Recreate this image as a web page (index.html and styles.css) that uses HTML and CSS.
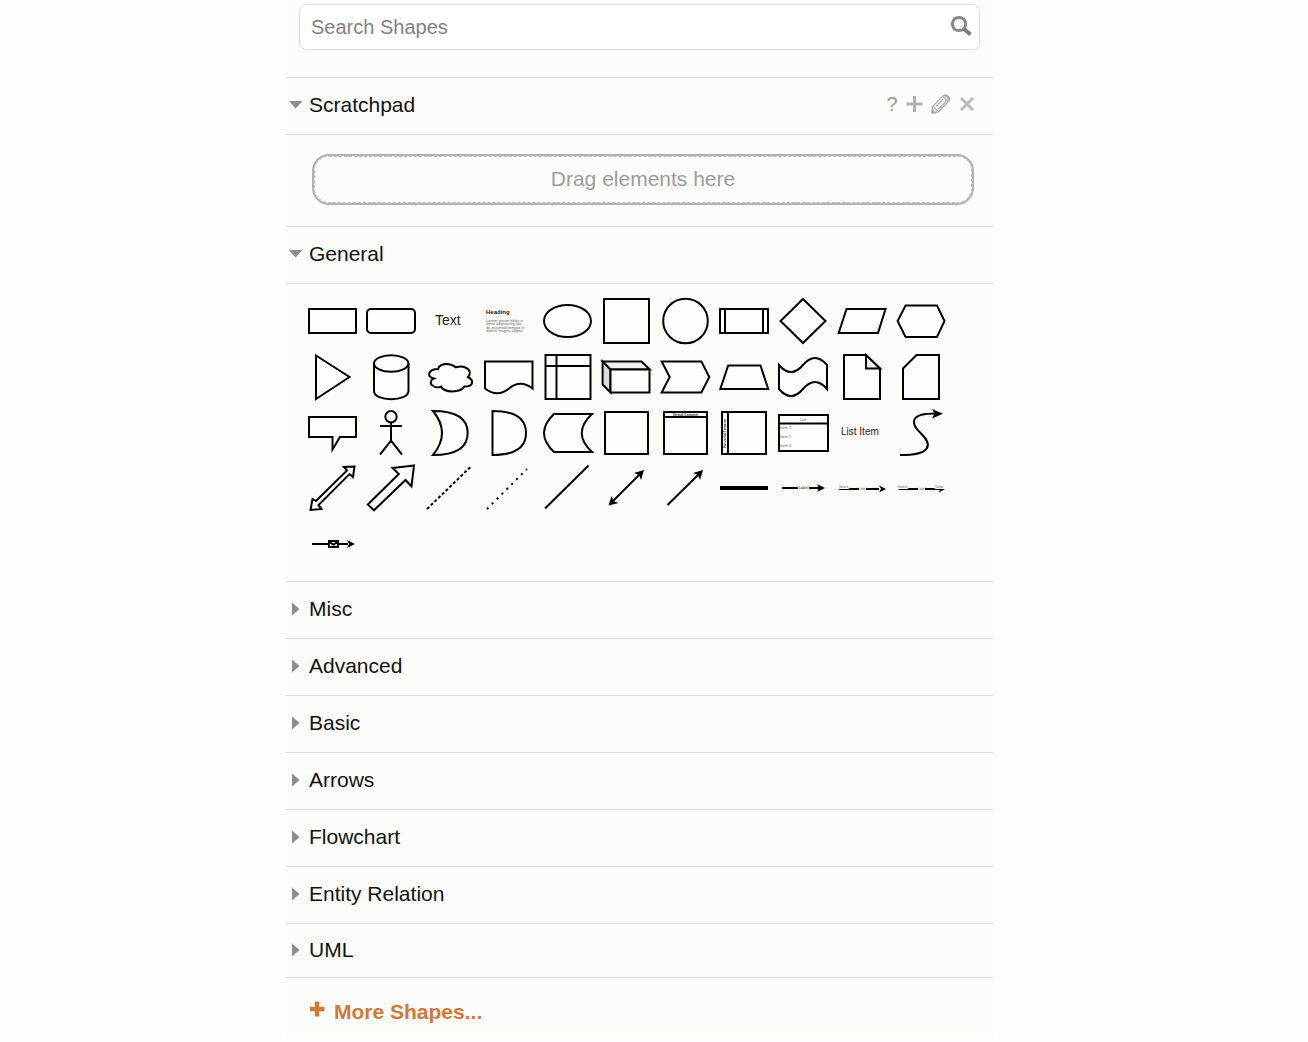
FILE: index.html
```html
<!DOCTYPE html>
<html lang="en">
<head>
<meta charset="utf-8">
<meta name="viewport" content="width=device-width, initial-scale=1">
<title>Shapes</title>
<link rel="stylesheet" href="styles.css">
</head>
<body>
<aside class="sidebar">
  <form class="search" role="search">
    <input class="search-input" type="text" placeholder="Search Shapes" aria-label="Search Shapes">
    <button class="search-button" type="button" aria-label="Search">
      <svg width="24" height="24" viewBox="0 0 24 24"><circle cx="9" cy="9" r="6.700" fill="none" stroke="#858585" stroke-width="2.800"/><path d="M14 14L20.500 19.500" stroke="#7c7c7c" stroke-width="3.800"/></svg>
    </button>
  </form>

  <section>
    <div class="header">
      <button class="toggle" type="button" aria-expanded="true"><svg class="marker" width="16" height="16" viewBox="0 0 16 16"><path d="M1 4H14.500L7.700 11.500Z"/></svg>Scratchpad</button>
      <div class="tools">
        <button class="tool" type="button" aria-label="Help">?</button>
        <button class="tool" type="button" aria-label="Add"><svg width="20" height="20" viewBox="0 0 20 20"><path d="M9.500 2V18M1.500 10H17.500" stroke="#b0b0b0" stroke-width="3"/></svg></button>
        <button class="tool" type="button" aria-label="Edit"><svg width="22" height="22" viewBox="0 0 22 22"><path d="M2 19.500L2.500 13.500L13.500 2.500Q15 1.200 17 2.500L19.200 4.700Q20.300 6.500 19 8L8 19Z M3 13.500L8 18.500M13 3.500L18.500 9M6 13.500L13.500 6M8.500 16L16 8.500" fill="none" stroke="#b0b0b0" stroke-width="1.300"/><path d="M1.500 20.500V15.500L6.500 20.500ZM13.500 2.500Q15.500 1 17.500 2.500L19.500 4.500Q20.500 6.500 19 8L16.500 4.500Z" fill="#a6a6a6"/></svg></button>
        <button class="tool" type="button" aria-label="Close"><svg width="20" height="20" viewBox="0 0 20 20"><path d="M4 4L16 16M16 4L4 16" stroke="#bababa" stroke-width="3"/></svg></button>
      </div>
    </div>
    <div class="scratchpad"><div class="dropzone">Drag elements here</div></div>
  </section>

  <section>
    <div class="header"><button class="toggle" type="button" aria-expanded="true"><svg class="marker" width="16" height="16" viewBox="0 0 16 16"><path d="M1 4H14.500L7.700 11.500Z"/></svg>General</button></div>
    <div class="shapes">
      <svg class="shape" viewBox="0 0 56 56"><rect x="5" y="16" width="47" height="24"/></svg>
      <svg class="shape" viewBox="0 0 56 56"><rect x="4" y="16" width="48" height="24" rx="4"/></svg>
      <svg class="shape" viewBox="0 0 56 56"><text class="t14" x="13" y="32">Text</text></svg>
      <svg class="shape" viewBox="0 0 56 56"><text class="t6 bold" x="5" y="21">Heading</text><g class="t4 faint"><text x="5" y="29">Lorem ipsum dolor si</text><text x="5" y="32">amet adipisicing elit.</text><text x="5" y="36">do eiusmod tempor in</text><text x="5" y="39">dolore magna aliqua.</text></g></svg>
      <svg class="shape" viewBox="0 0 56 56"><ellipse cx="27.500" cy="28" rx="23.500" ry="16"/></svg>
      <svg class="shape" viewBox="0 0 56 56"><rect x="6" y="6" width="45" height="44"/></svg>
      <svg class="shape" viewBox="0 0 56 56"><circle cx="28.500" cy="28" r="22.300"/></svg>
      <svg class="shape" viewBox="0 0 56 56"><path d="M4 16H52V40H4ZM9 16V40M47 16V40"/></svg>
      <svg class="shape" viewBox="0 0 56 56"><path d="M28 6L50.500 28L28 50L5.500 28Z"/></svg>
      <svg class="shape" viewBox="0 0 56 56"><path d="M12.500 16H51.500L44 40H4.700Z"/></svg>
      <svg class="shape" viewBox="0 0 56 56"><path d="M12.600 12.500H44L51.500 28L44 44H12.600L4.600 28Z"/></svg>

      <svg class="shape" viewBox="0 0 56 56"><path d="M12 6.500L45.500 28L12 50Z"/></svg>
      <svg class="shape" viewBox="0 0 56 56"><path d="M11 14.500V42C11 53 45.500 53 45.500 42V14.500"/><ellipse cx="28.200" cy="14.500" rx="17.200" ry="8.300"/></svg>
      <svg class="shape" viewBox="0 0 56 56"><path d="M16 20C6.400 20 4 28 11.700 29.600C4 33.100 12.600 40.800 18.900 37.600C23.200 44 37.600 44 42.400 37.600C52 37.600 52 31.200 46 28C52 21.600 42.400 15.200 34 18.400C28 13.600 18.400 13.600 16 20Z"/></svg>
      <svg class="shape" viewBox="0 0 56 56"><path d="M4 12.500H51.500V39.500Q39.500 30 28 39.500T4 39.500Z"/></svg>
      <svg class="shape" viewBox="0 0 56 56"><path d="M5.500 6H50.500V50H5.500ZM16.500 6V50M5.500 17H50.500"/></svg>
      <svg class="shape" viewBox="0 0 56 56"><path class="shade-light" d="M4.600 12.500H43.500L51.800 20.500H12.500Z"/><path class="shade" d="M4.600 12.500L12.500 20.500V43.500L4.600 35.500Z"/><path d="M12.500 20.500H51.500V43.500H12.500Z"/></svg>
      <svg class="shape" viewBox="0 0 56 56"><path d="M4.700 12.500H44.400L52.300 28L44.400 43.500H4.700L12.700 28Z"/></svg>
      <svg class="shape" viewBox="0 0 56 56"><path d="M12.200 16.500H44.500L52.200 40H4.300Z"/></svg>
      <svg class="shape" viewBox="0 0 56 56"><path d="M4 16Q16 30 28 16T52 16V40Q40 26 28 40T4 40Z"/></svg>
      <svg class="shape" viewBox="0 0 56 56"><path d="M10 6H32L46 19.500V50H10Z"/><path class="shade-light" d="M32 6V19.500H46Z"/></svg>
      <svg class="shape" viewBox="0 0 56 56"><path d="M23.500 6H46V50H10V19.500Z"/></svg>

      <svg class="shape" viewBox="0 0 56 56"><path d="M5 12H52V32H36L28.500 44.500V32H5Z"/></svg>
      <svg class="shape" viewBox="0 0 56 56"><circle cx="28" cy="11.700" r="5.700"/><path d="M28 17.300V35.700M17 21H39M17 49.700L28 35.700L39 49.700"/></svg>
      <svg class="shape" viewBox="0 0 56 56"><path d="M11 6Q45.700 6 45.700 28T11 50Q29 28 11 6Z"/></svg>
      <svg class="shape" viewBox="0 0 56 56"><path d="M11.500 6Q45 6 45 28T11.500 50Z"/></svg>
      <svg class="shape" viewBox="0 0 56 56"><path d="M14 9H52Q31.500 28 52 47H14Q-6 28 14 9Z"/></svg>
      <svg class="shape" viewBox="0 0 56 56"><rect x="7" y="7" width="43" height="42"/></svg>
      <svg class="shape" viewBox="0 0 56 56"><path d="M7 7H50V49H7ZM7 12H50"/><text class="t3 bold" x="28.500" y="10.500" text-anchor="middle">Vertical Container</text></svg>
      <svg class="shape" viewBox="0 0 56 56"><path d="M6 7H50V49H6ZM12 7V49"/><text class="t3 bold" transform="translate(10 28) rotate(-90)" text-anchor="middle">Horizontal Container</text></svg>
      <svg class="shape" viewBox="0 0 56 56"><path d="M4 10H53V46H4ZM4 18.500H53"/><text class="t4 faint" x="28" y="15.500" text-anchor="middle">List</text><g class="t4 faint"><text x="5" y="24">Item 1</text><text x="5" y="33">Item 2</text><text x="5" y="42">Item 3</text></g></svg>
      <svg class="shape" viewBox="0 0 56 56"><text class="t10" x="7" y="30">List Item</text></svg>
      <svg class="shape" viewBox="0 0 56 56"><path class="line" d="M7 50C38 50 40 40 28 28.500C16 17 18 8.500 42 8.500"/><path class="head" d="M50 8.700L39 4L41.500 8.700L39 13.500Z"/></svg>

      <svg class="shape" viewBox="0 0 56 56"><path d="M50.500 5.500L40 6L43 9.500L12 40L8.500 38L6.500 49L17.500 48L14.500 44L45.500 13L49 16Z"/></svg>
      <svg class="shape" viewBox="0 0 56 56"><path d="M51 4.500L29.500 7L35.800 13L4.800 43.500L11 49.300L42.500 19L48.500 25.300Z"/></svg>
      <svg class="shape" viewBox="0 0 56 56"><path class="line" stroke-dasharray="3 2.200" d="M5 48L49 5.500"/></svg>
      <svg class="shape" viewBox="0 0 56 56"><path class="line" stroke-dasharray="2 4.900" d="M6 48L46 8"/></svg>
      <svg class="shape" viewBox="0 0 56 56"><path class="line" d="M5 47.500L48.500 4.500"/></svg>
      <svg class="shape" viewBox="0 0 56 56"><path class="line" d="M14 41L42 13"/><path class="head" d="M46 9L36 12L41 14L43 19ZM10.500 44.500L20.500 42L15.500 40L13.500 35Z"/></svg>
      <svg class="shape" viewBox="0 0 56 56"><path class="line" d="M10.500 44L42 13"/><path class="head" d="M46 9L36 12L41 14L43 19Z"/></svg>
      <svg class="shape" viewBox="0 0 56 56"><path class="head" d="M4 25H52V29H4Z"/></svg>
      <svg class="shape" viewBox="0 0 56 56"><path class="line" d="M7 27H23M34 27H44"/><path class="head" d="M50 27L42 23L44 27L42 31Z"/><text class="t4" x="28.500" y="28.300" text-anchor="middle">Label</text></svg>
      <svg class="shape" viewBox="0 0 56 56"><path class="thin" d="M5 28.500H15"/><path class="line" d="M15 28H25M32 28H45"/><path class="head" d="M52 28L45 24.500L47 28L45 31.500Z"/><text class="t3 faint" x="28.500" y="29" text-anchor="middle">Label</text><text class="t3 faint" x="5" y="27">Source</text></svg>
      <svg class="shape" viewBox="0 0 56 56"><path class="thin" d="M5.500 28.500H15M42 28.500H50"/><path class="line" d="M15 28H25M32 28H42"/><path class="head" d="M52 28L46 31.500L47.500 28Z"/><text class="t3 faint" x="28.500" y="29" text-anchor="middle">Label</text><text class="t3 faint" x="5" y="27">Source</text><text class="t3 faint" x="42" y="27">Target</text></svg>

      <svg class="shape" viewBox="0 0 56 56"><path class="line" d="M8 27H24M33 27H44"/><path class="head" d="M51 27L43 23L45 27L43 31Z"/><path d="M25 24H34V30H25ZM25 24L29.500 28L34 24"/></svg>
    </div>
  </section>

  <nav class="libraries" aria-label="Shape libraries">
    <div class="header"><button class="toggle" type="button" aria-expanded="false"><svg class="marker" width="16" height="16" viewBox="0 0 16 16"><path d="M4 1.500V14.500L11.500 8Z"/></svg>Misc</button></div>
    <div class="header"><button class="toggle" type="button" aria-expanded="false"><svg class="marker" width="16" height="16" viewBox="0 0 16 16"><path d="M4 1.500V14.500L11.500 8Z"/></svg>Advanced</button></div>
    <div class="header"><button class="toggle" type="button" aria-expanded="false"><svg class="marker" width="16" height="16" viewBox="0 0 16 16"><path d="M4 1.500V14.500L11.500 8Z"/></svg>Basic</button></div>
    <div class="header"><button class="toggle" type="button" aria-expanded="false"><svg class="marker" width="16" height="16" viewBox="0 0 16 16"><path d="M4 1.500V14.500L11.500 8Z"/></svg>Arrows</button></div>
    <div class="header"><button class="toggle" type="button" aria-expanded="false"><svg class="marker" width="16" height="16" viewBox="0 0 16 16"><path d="M4 1.500V14.500L11.500 8Z"/></svg>Flowchart</button></div>
    <div class="header"><button class="toggle" type="button" aria-expanded="false"><svg class="marker" width="16" height="16" viewBox="0 0 16 16"><path d="M4 1.500V14.500L11.500 8Z"/></svg>Entity Relation</button></div>
    <div class="header"><button class="toggle" type="button" aria-expanded="false"><svg class="marker" width="16" height="16" viewBox="0 0 16 16"><path d="M4 1.500V14.500L11.500 8Z"/></svg>UML</button></div>
  </nav>

  <div class="footer">
    <button class="more" type="button"><svg width="16" height="18" viewBox="0 0 16 18"><path d="M7 1.500V16.500M0 9H14.500" stroke="#cf7a39" stroke-width="4.500"/></svg>More Shapes...</button>
  </div>
</aside>
</body>
</html>
```
FILE: styles.css
```css
* {
  box-sizing: border-box;
}

body {
  margin: 0;
  padding-right: 29px;
  background: #fefefe;
  color: #111;
  font: 21px/24px "Liberation Sans", Arial, sans-serif;
}

button {
  margin: 0;
  padding: 0;
  border: 0;
  background: none;
  color: inherit;
  font: inherit;
  cursor: pointer;
}

svg {
  display: block;
  flex: none;
}

.sidebar {
  max-width: 707px;
  margin: 0 auto;
  background: #fcfcfb;
}

.search {
  display: flex;
  align-items: center;
  margin: 0 13px;
  padding: 4px 0 27px;
}

.search-input {
  flex: 1;
  min-width: 0;
  height: 46px;
  padding: 0 44px 0 11px;
  border: 1px solid #dcdcdc;
  border-radius: 7px;
  background: #fff;
  font: 20px/24px "Liberation Sans", Arial, sans-serif;
}

.search-input::placeholder {
  color: #828282;
  opacity: 1;
}

.search-button {
  margin-left: -30px;
  margin-right: 6px;
}

.header {
  display: flex;
  min-height: 57px;
  padding-right: 13px;
  border-top: 1px solid #dedede;
}

.toggle {
  flex: 1;
  display: flex;
  align-items: center;
  gap: 5px;
  padding: 0 0 2px 2px;
  text-align: left;
}

.marker {
  fill: #8c8c8c;
}

.tools {
  display: flex;
  align-items: center;
  padding-bottom: 4px;
  color: #999;
  font-size: 20px;
}

.tool {
  display: flex;
  justify-content: center;
  width: 26px;
}

.tool:first-child {
  width: 20px;
}

.scratchpad {
  padding: 19px 19px 21px 26px;
  border-top: 1px solid #dedede;
}

.dropzone {
  padding: 11px 0 12px;
  border: 2px solid #b2b2b2;
  border-radius: 17px;
  outline: 1px dashed #bcbcbc;
  outline-offset: -3px;
  color: #9c9c9c;
  text-align: center;
}

.shapes {
  display: grid;
  grid-template-columns: repeat(11, 1fr);
  justify-items: center;
  padding: 9px 43px 8px 17px;
  border-top: 1px solid #dedede;
}

.shape {
  width: 56px;
  height: 56px;
  fill: #fefefe;
  stroke: #000;
  stroke-width: 2px;
}

.shape text {
  fill: #222;
  stroke: none;
}

.shape .faint,
.shape .faint text {
  fill: #666;
}

.shape .line {
  fill: none;
}

.shape .thin {
  stroke-width: 1px;
}

.shape .head {
  fill: #000;
  stroke: none;
}

.shade {
  fill: #dcdcdc;
}

.shade-light {
  fill: #f0f0f0;
}

.t14 { font-size: 14px; }
.t10 { font-size: 10px; }
.t6 { font-size: 6px; }
.t4 { font-size: 4px; }
.t3 { font-size: 3px; }
.bold { font-weight: 700; }

.libraries .header:last-child {
  min-height: 54px;
}

.footer {
  padding: 22px 24px 13px;
  border-top: 1px solid #dedede;
}

.more {
  display: flex;
  gap: 8px;
  color: #cf7a39;
  font-weight: 700;
}
```
